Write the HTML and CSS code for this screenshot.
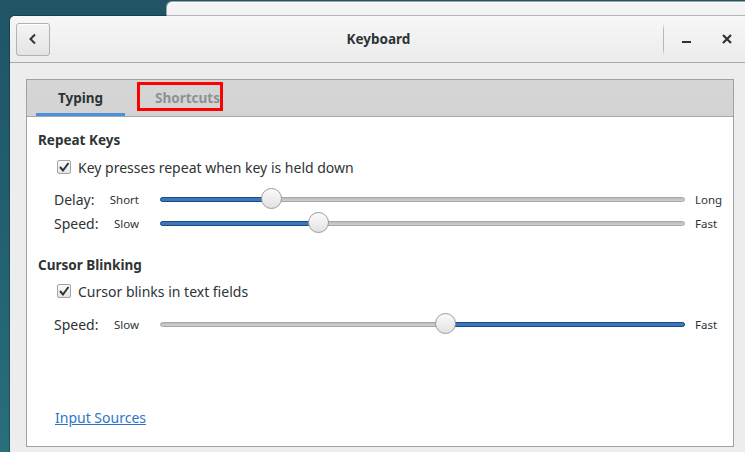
FILE: index.html
```html
<!DOCTYPE html>
<html>
<head>
<meta charset="utf-8">
<link rel="stylesheet" href="styles.css">
</head>
<body>
<div class="desktop">
  <div class="bg-window"></div>
  <div class="window">
    <header class="headerbar">
      <button class="back-btn" aria-label="Back">
        <svg width="10" height="12" viewBox="0 0 10 12"><path d="M7 1.5 L2.5 6 L7 10.5" fill="none" stroke="#2e3436" stroke-width="2"/></svg>
      </button>
      <div class="title">Keyboard</div>
      <div class="hb-sep"></div>
      <button class="wbtn" aria-label="Minimize">
        <svg width="10" height="10" viewBox="0 0 10 10"><rect x="0" y="7" width="9" height="2" fill="#2e3436"/></svg>
      </button>
      <button class="wbtn close" aria-label="Close">
        <svg width="10" height="10" viewBox="0 0 10 10"><path d="M1 1 L9 9 M9 1 L1 9" stroke="#2e3436" stroke-width="2.2"/></svg>
      </button>
    </header>
    <div class="body">
      <div class="notebook">
        <div class="tabs">
          <div class="tab active">Typing</div>
          <div class="tab">Shortcuts</div>
          <div class="highlight"></div>
        </div>
        <div class="page">
          <div class="section-title">Repeat Keys</div>
          <label class="check-row"><span class="checkbox"><svg width="12" height="12" viewBox="0 0 12 12"><path d="M2 6 L5 9.5 L10.5 2" fill="none" stroke="#2e3436" stroke-width="2"/></svg></span>Key presses repeat when key is held down</label>
          <div class="slider-row">
            <span class="lbl">Delay:</span>
            <span class="small start">Short</span>
            <div class="track"><div class="fill" style="width:21%"></div><div class="knob" style="left:21%"></div></div>
            <span class="small end">Long</span>
          </div>
          <div class="slider-row">
            <span class="lbl">Speed:</span>
            <span class="small start">Slow</span>
            <div class="track"><div class="fill" style="width:30.1%"></div><div class="knob" style="left:30.1%"></div></div>
            <span class="small end">Fast</span>
          </div>
          <div class="section-title second">Cursor Blinking</div>
          <label class="check-row"><span class="checkbox"><svg width="12" height="12" viewBox="0 0 12 12"><path d="M2 6 L5 9.5 L10.5 2" fill="none" stroke="#2e3436" stroke-width="2"/></svg></span>Cursor blinks in text fields</label>
          <div class="slider-row third">
            <span class="lbl">Speed:</span>
            <span class="small start">Slow</span>
            <div class="track"><div class="fill inverted" style="left:54.3%"></div><div class="knob" style="left:54.3%"></div></div>
            <span class="small end">Fast</span>
          </div>
          <div class="spacer"></div>
          <a class="link" href="#">Input Sources</a>
        </div>
      </div>
    </div>
  </div>
</div>
</body>
</html>
```
FILE: styles.css
```css
* { box-sizing: border-box; }
html, body { margin: 0; padding: 0; }
body {
  width: 745px; height: 452px; overflow: hidden;
  font-family: "Noto Sans", "DejaVu Sans", sans-serif;
  color: #2e3436;
}
.desktop {
  position: relative; width: 745px; height: 452px; overflow: hidden;
  background: linear-gradient(180deg, #1f5565 0%, #22606f 50%, #2a6e7b 100%);
}
.bg-window {
  position: absolute; left: 167px; top: 2px; width: 600px; height: 40px;
  border-radius: 5px 5px 0 0;
  background: linear-gradient(180deg, #f6f6f6, #e6e6e6);
  border-top: 1px solid #ffffff;
  box-shadow: 0 0 0 1px #9aa4a8;
}
.window {
  position: absolute; left: 10px; top: 16px; width: 760px; height: 450px;
  background: #ededed;
  border-radius: 5px 5px 0 0;
  display: flex; flex-direction: column;
  box-shadow: 0 0 0 1px rgba(0,0,0,0.25);
}
.headerbar {
  height: 47px; flex: none;
  display: flex; align-items: center;
  background: linear-gradient(180deg, #f7f7f7, #ececec);
  border-bottom: 1px solid #a9a9a9;
  border-radius: 5px 5px 0 0;
  position: relative;
  padding-left: 6px;
}
.back-btn {
  width: 34px; height: 33px; padding: 0; margin: 0;
  border: 1px solid #b2b2b2; border-radius: 3px;
  background: linear-gradient(180deg, #f4f4f4, #e4e4e4);
  display: flex; align-items: center; justify-content: center;
  box-shadow: inset 0 1px #fff;
}
.title {
  flex: 1; text-align: center; font-weight: bold; font-size: 13.5px;
  padding-left: 44px; margin-top: -1px;
}
.hb-sep {
  width: 1px; height: 33px; margin-right: 10px;
  background: linear-gradient(180deg, rgba(180,180,180,0), #b8b8b8 20%, #b8b8b8 80%, rgba(180,180,180,0));
}
.wbtn {
  width: 26px; height: 26px; padding: 0; margin: 0 7px 0 0;
  border: none; background: transparent;
  display: flex; align-items: center; justify-content: center;
}
.wbtn.close { margin-left: 7px; margin-right: 30px; }
.body {
  flex: 1; padding: 16px 0 0 16px;
}
.notebook {
  width: 708px; height: 368px;
  border: 1px solid #a1a1a1;
  display: flex; flex-direction: column;
  background: #fff;
}
.tabs {
  height: 37px; flex: none; position: relative;
  background: linear-gradient(180deg, #d6d6d6, #d3d3d3);
  border-bottom: 1px solid #a8a8a8;
  display: flex; padding-left: 9px;
  font-size: 13.5px; font-weight: bold;
}
.tab {
  height: 36px; display: flex; align-items: center; justify-content: center;
  color: #8f9192;
}
.tab:first-child { width: 89px; }
.tab:nth-child(2) { width: 101px; padding-left: 24px; }
.tab.active {
  color: #2e3436;
  box-shadow: inset 0 -3px #4a90d9;
}
.highlight {
  position: absolute; left: 110px; top: 2px; width: 86px; height: 29px;
  border: 3px solid #ff0000;
}
.page {
  flex: 1; display: flex; flex-direction: column;
  padding: 14px 0 19px 11px;
  font-size: 14px;
}
.section-title { font-weight: bold; height: 18px; line-height: 18px; font-size: 13.5px; }
.section-title.second { margin-top: 22px; }
.check-row {
  display: flex; align-items: center; height: 18px; margin-top: 9px;
  padding-left: 19px;
}
.section-title.second + .check-row { margin-top: 8px; }
.checkbox {
  width: 14px; height: 14px; margin-right: 7px;
  border: 1px solid #a4a4a4; border-radius: 2px;
  background: linear-gradient(180deg, #fbfbfb, #e4e4e4);
  display: flex; align-items: center; justify-content: center;
}
.slider-row {
  display: grid; grid-template-columns: 56px 29px 546px auto;
  align-items: center;
  height: 22px; margin-top: 2px; padding-left: 16px;
}
.check-row + .slider-row { margin-top: 12px; }
.slider-row.third { margin-top: 13px; }
.lbl { font-size: 14px; }
.small { font-size: 11.5px; }
.small.start { justify-self: end; }
.slider-row .track { margin-left: 21px; width: 525px; }
.small.end { padding-left: 10px; }
.track {
  position: relative; height: 5px;
  background: linear-gradient(180deg, #bdbdbd, #cfcfcf);
  border: 1px solid #a6a6a6; border-radius: 3px;
}
.fill {
  position: absolute; left: -1px; top: -1px; bottom: -1px;
  background: #3a77bd; border: 1px solid #1b4a80; border-radius: 3px;
}
.fill.inverted { right: -1px; }
.knob {
  position: absolute; top: 50%; width: 21px; height: 21px;
  margin-left: -10px; margin-top: -11px;
  border-radius: 50%;
  background: linear-gradient(180deg, #fbfbfb, #e2e2e2);
  border: 1px solid #9b9b9b;
}
.spacer { flex: 1; }
.link {
  color: #2a76c6; text-decoration: underline; margin-left: 17px;
  font-size: 14px; align-self: flex-start;
}
```
